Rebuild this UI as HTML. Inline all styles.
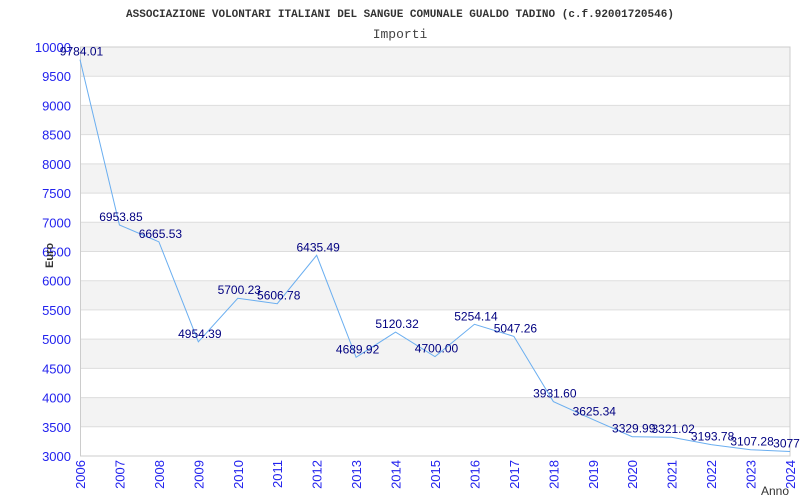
<!DOCTYPE html>
<html><head><meta charset="utf-8"><style>body{margin:0;background:#fff}svg{display:block}</style></head><body>
<svg id="s" width="800" height="500" xmlns="http://www.w3.org/2000/svg" font-family="Liberation Sans, sans-serif">
<text x="400" y="17" text-anchor="middle" font-family="Liberation Mono, monospace" font-size="11" font-weight="bold" fill="#333">ASSOCIAZIONE VOLONTARI ITALIANI DEL SANGUE COMUNALE GUALDO TADINO (c.f.92001720546)</text>
<text x="400" y="38" text-anchor="middle" font-family="Liberation Mono, monospace" font-size="13" fill="#444">Importi</text>
<g id="g"></g>
<text transform="translate(53,268) rotate(-90)" font-size="11" font-weight="bold" fill="#333">Euro</text>
<text x="761" y="495" font-size="12" fill="#333">Anno</text>
</svg>
<script>
var g=document.getElementById('g'),h='';
var X0=80,X1=790,Y0=456,Y1=47,sy=(Y0-Y1)/7000,sx=(X1-X0)/18;
function Y(v){return Y0-(v-3000)*sy}
for(var i=0;i<14;i++){var v=10000-i*500;h+='<rect x="80" y="'+Y(v)+'" width="710" height="'+(500*sy)+'" fill="'+(i%2==0?'#f3f3f3':'#fff')+'"/>';h+='<line x1="80" x2="790" y1="'+Y(v)+'" y2="'+Y(v)+'" stroke="#ddd"/>';}
h+='<rect x="80.5" y="47" width="709.5" height="409" fill="none" stroke="#ccc"/>';
for(var v=3000;v<=10000;v+=500)h+='<text x="71" y="'+(Y(v)+5)+'" text-anchor="end" font-size="13" fill="#2222ee">'+v+'</text>';
var d=[9784.01,6953.85,6665.53,4954.39,5700.23,5606.78,6435.49,4689.92,5120.32,4700.00,5254.14,5047.26,3931.60,3625.34,3329.99,3321.02,3193.78,3107.28,3077.7];
var p=d.map(function(v,i){return (X0+i*sx)+','+Y(v)}).join(' ');
h+='<polyline points="'+p+'" fill="none" stroke="#6aaef0" stroke-width="1"/>';
d.forEach(function(v,i){var x=X0+i*sx;var t=(i==18?'3077.7':v.toFixed(2));
h+='<text x="'+(x+1.5)+'" y="'+(Y(v)-4)+'" text-anchor="middle" font-size="12" fill="#000080">'+t+'</text>';
h+='<text transform="translate('+(x+5)+',460) rotate(-90)" text-anchor="end" font-size="13" fill="#2222ee">'+(2006+i)+'</text>';});
g.innerHTML=h;
</script>
</body></html>
